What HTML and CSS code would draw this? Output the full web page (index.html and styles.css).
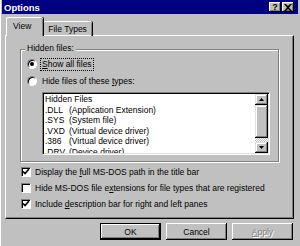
FILE: index.html
```html
<!DOCTYPE html>
<html lang="en">
<head>
    <meta charset="UTF-8">
    <title>Options</title>
    <link rel="stylesheet" href="styles.css">
</head>
<body>
    <div class="dialog">
        <div class="titlebar">
            <span class="title">Options</span>
            <div class="title-btns">
                <span class="tbtn">?</span>
                <span class="tbtn">
                    <svg width="8" height="7" viewBox="0 0 8 7"><path d="M0 0h2l2 2 2-2h2L5 3.5 8 7H6L4 5 2 7H0l3-3.5z" fill="#000"/></svg>
                </span>
            </div>
        </div>

        <div class="tabs">
            <div class="tab active">View</div>
            <div class="tab">File Types</div>
        </div>

        <div class="panel">
            <div class="group">
                <div class="group-label">Hidden files:</div>
                <div class="option">
                    <span class="radio on"></span>
                    <span class="focus"><u>S</u>how all files</span>
                </div>
                <div class="option">
                    <span class="radio"></span>
                    <span>Hide files of these <u>t</u>ypes:</span>
                </div>
                <div class="listbox">
                    <div class="list">
                        <div class="row">Hidden Files</div>
                        <div class="row"><span class="ext">.DLL</span><span>(Application Extension)</span></div>
                        <div class="row"><span class="ext">.SYS</span><span>(System file)</span></div>
                        <div class="row"><span class="ext">.VXD</span><span>(Virtual device driver)</span></div>
                        <div class="row"><span class="ext">.386</span><span>(Virtual device driver)</span></div>
                        <div class="row"><span class="ext">.DRV</span><span>(Device driver)</span></div>
                    </div>
                    <div class="scrollbar">
                        <span class="sbtn"><svg width="5" height="3" viewBox="0 0 5 3"><path d="M2.5 0L5 3H0z" fill="#000"/></svg></span>
                        <span class="thumb"></span>
                        <span class="track"></span>
                        <span class="sbtn"><svg width="5" height="3" viewBox="0 0 5 3"><path d="M0 0h5L2.5 3z" fill="#000"/></svg></span>
                    </div>
                </div>
            </div>

            <div class="checks">
                <div class="check">
                    <span class="box"><svg width="8" height="8" viewBox="0 0 8 8"><path d="M1 3.5l2 2 4-4.5" fill="none" stroke="#000" stroke-width="1.6"/></svg></span>
                    <span>Display the <u>f</u>ull MS-DOS path in the title bar</span>
                </div>
                <div class="check">
                    <span class="box"></span>
                    <span>Hide MS-DOS file e<u>x</u>tensions for file types that are registered</span>
                </div>
                <div class="check">
                    <span class="box"><svg width="8" height="8" viewBox="0 0 8 8"><path d="M1 3.5l2 2 4-4.5" fill="none" stroke="#000" stroke-width="1.6"/></svg></span>
                    <span>Include <u>d</u>escription bar for right and left panes</span>
                </div>
            </div>
        </div>

        <div class="buttons">
            <span class="btn default">OK</span>
            <span class="btn">Cancel</span>
            <span class="btn disabled"><u>A</u>pply</span>
        </div>
    </div>
</body>
</html>
```

FILE: styles.css
```css
body {
    margin: 0;
    font-family: "Liberation Sans", Arial, sans-serif;
    font-size: 8.5px;
    color: #000;
    background-color: #c0c0c0;
}
.dialog {
    width: 300px;
    height: 246px;
    box-sizing: border-box;
    background: #c0c0c0;
    box-shadow: inset 1px 0 #fff;
    overflow: hidden;
}
.titlebar {
    height: 14px;
    margin: 0 2px;
    padding: 0 4px 0 2px;
    background: #000080;
    color: #fff;
    display: flex;
    align-items: center;
    justify-content: space-between;
}
.title {
    font-weight: bold;
    font-size: 9.5px;
}
.title-btns {
    display: flex;
    gap: 1px;
}
.tbtn {
    width: 12px;
    height: 10px;
    display: flex;
    align-items: center;
    justify-content: center;
    background: #c0c0c0;
    color: #000;
    font-weight: bold;
    font-size: 9px;
    box-shadow: inset -1px -1px #000, inset 1px 1px #fff, inset -2px -2px #808080;
}

/* tabs */
.tabs {
    display: flex;
    align-items: flex-end;
    height: 19px;
    margin: 3px 0 -1px 6px;
}
.tab {
    height: 15px;
    box-sizing: border-box;
    padding: 0 5px 0 4px;
    display: flex;
    align-items: center;
    border-top: 1px solid #fff;
    border-left: 1px solid #fff;
    border-radius: 2px 2px 0 0;
    box-shadow: inset -1px 0 #808080, 1px 0 #000;
}
.tab.active {
    position: relative;
    z-index: 1;
    height: 19px;
    padding: 0 12px 2px 6px;
    background: #c0c0c0;
}

/* panel */
.panel {
    height: 184px;
    box-sizing: border-box;
    margin: 0 6px 0 5px;
    padding: 13px 14px 0 14px;
    border-top: 1px solid #fff;
    border-left: 1px solid #fff;
    border-right: 1px solid #000;
    border-bottom: 1px solid #000;
    box-shadow: inset -1px -1px #808080;
}
.group {
    border: 1px solid #808080;
    box-shadow: inset 1px 1px #fff, 1px 1px #fff;
    padding: 0 8px 6px 6px;
}
.group-label {
    width: fit-content;
    margin: -7px 0 0 -2px;
    padding: 0 2px;
    line-height: 10px;
    background: #c0c0c0;
}
.option {
    display: flex;
    align-items: center;
    height: 12px;
    margin-top: 5px;
}
.radio {
    width: 10px;
    height: 10px;
    box-sizing: border-box;
    margin-right: 5px;
    border-radius: 50%;
    background: #fff;
    border: 1px solid;
    border-color: #808080 #fff #fff #808080;
    box-shadow: inset 1px 1px #000;
}
.radio.on::after {
    content: "";
    display: block;
    width: 4px;
    height: 4px;
    margin: 2px;
    border-radius: 50%;
    background: #000;
}
.focus {
    border: 1px dotted #000;
    padding: 0 1px;
    margin-left: -2px;
    line-height: 11px;
}

/* list */
.listbox {
    display: flex;
    height: 63px;
    box-sizing: border-box;
    margin: 5px 0 0 15px;
    padding: 1px;
    background: #fff;
    border: 1px solid;
    border-color: #808080 #fff #fff #808080;
    box-shadow: inset 1px 1px #000, inset -1px -1px #dfdfdf;
}
.list {
    flex: 1;
    overflow: hidden;
    padding-left: 1px;
    line-height: 10.5px;
}
.row {
    display: flex;
    white-space: nowrap;
}
.ext {
    width: 24px;
}
.scrollbar {
    width: 13px;
    display: flex;
    flex-direction: column;
    background: repeating-conic-gradient(#fff 0 25%, #c0c0c0 0 50%) 0 0 / 2px 2px;
}
.sbtn, .thumb {
    flex: none;
    height: 11px;
    display: flex;
    align-items: center;
    justify-content: center;
    background: #c0c0c0;
    box-shadow: inset -1px -1px #000, inset 1px 1px #dfdfdf, inset -2px -2px #808080, inset 2px 2px #fff;
}
.thumb {
    height: 33px;
}
.track {
    flex: 1;
}

/* checkboxes */
.checks {
    margin-top: 2px;
}
.check {
    display: flex;
    align-items: center;
    height: 16px;
    padding-left: 1px;
    white-space: nowrap;
}
.box {
    width: 10px;
    height: 10px;
    box-sizing: border-box;
    margin-right: 4px;
    display: flex;
    align-items: center;
    justify-content: center;
    background: #fff;
    border: 1px solid;
    border-color: #808080 #fff #fff #808080;
    box-shadow: inset 1px 1px #000;
}

/* buttons */
.buttons {
    display: flex;
    justify-content: flex-end;
    gap: 5px;
    margin: 4px 7px 0 0;
}
.btn {
    width: 61px;
    height: 17px;
    display: flex;
    align-items: center;
    justify-content: center;
    background: #c0c0c0;
    box-shadow: inset -1px -1px #000, inset 1px 1px #fff, inset -2px -2px #808080;
}
.btn.default {
    box-shadow: inset 0 0 0 1px #000, inset -2px -2px #000, inset 2px 2px #fff, inset -3px -3px #808080;
}
.btn.disabled {
    color: #808080;
    text-shadow: 1px 1px #fff;
}
```
